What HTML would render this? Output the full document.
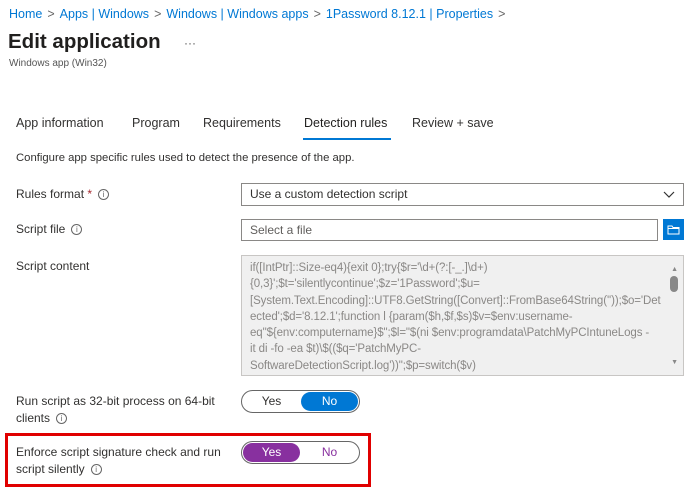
<!DOCTYPE html>
<html><head><style>
body{margin:0;width:699px;height:494px;background:#fff;font-family:"Segoe UI","Liberation Sans",sans-serif;color:#323130;position:relative;overflow:hidden}
.a{position:absolute;white-space:nowrap}
.bc{top:7px;left:9px;font-size:12.5px;color:#0078d4}
.bc span{color:#666;margin:0 5px}
.lbl{font-size:12px;color:#323130}
.i{display:inline-block;width:9px;height:9px;border:1px solid #666;border-radius:50%;font-size:8px;line-height:9px;text-align:center;color:#666;margin-left:6px;vertical-align:1px}
.box{position:absolute;border:1px solid #8a8886;box-sizing:border-box;font-size:12px;padding-left:8px}
.tog{position:absolute;border:1px solid #666;border-radius:12px;box-sizing:border-box;width:119px;height:23px;font-size:12px}
.tog div{position:absolute;top:1px;height:19px;width:57px;border-radius:10px;text-align:center;line-height:19px}
</style></head><body>
<div class="a bc">Home<span>&gt;</span>Apps | Windows<span>&gt;</span>Windows | Windows apps<span>&gt;</span>1Password 8.12.1 | Properties<span>&gt;</span></div>
<div class="a" style="top:30px;left:8px;font-size:20.5px;font-weight:600;color:#201f1e">Edit application</div>
<div class="a" style="top:36px;left:184px;font-size:12px;color:#555">···</div>
<div class="a" style="top:58px;left:9px;font-size:10px;color:#555">Windows app (Win32)</div>
<div class="a" style="top:116px;left:16px;font-size:12.5px">App information</div>
<div class="a" style="top:116px;left:132px;font-size:12.5px">Program</div>
<div class="a" style="top:116px;left:203px;font-size:12.5px">Requirements</div>
<div class="a" style="top:116px;left:304px;font-size:12.5px;color:#201f1e">Detection rules</div>
<div class="a" style="top:138px;left:303px;width:88px;height:2px;background:#0078d4"></div>
<div class="a" style="top:116px;left:412px;font-size:12.5px">Review + save</div>
<div class="a" style="top:152px;left:16px;font-size:11.3px">Configure app specific rules used to detect the presence of the app.</div>
<div class="a lbl" style="top:187px;left:16px">Rules format <span style="color:#a4262c">*</span><span class="i">i</span></div>
<div class="box" style="left:241px;top:183px;width:443px;height:23px;line-height:21px">Use a custom detection script
<svg style="position:absolute;right:8px;top:7px" width="12" height="8"><path d="M1 1l5 5 5-5" fill="none" stroke="#333" stroke-width="1.2"/></svg></div>
<div class="a lbl" style="top:222px;left:16px">Script file<span class="i">i</span></div>
<div class="box" style="left:241px;top:219px;width:417px;height:22px;line-height:20px;color:#605e5c">Select a file</div>
<div class="a" style="left:663px;top:219px;width:21px;height:21px;background:#0078d4">
<svg width="21" height="21"><path d="M5 7h4l1 1.5h6v6.5h-11z M5 9.5h11" fill="none" stroke="#fff" stroke-width="1"/></svg></div>
<div class="a lbl" style="top:259px;left:16px">Script content</div>
<div class="box" style="left:241px;top:255px;width:443px;height:121px;background:#f0f0f0;border-color:#c8c6c4;color:#8a8886;font-size:11.5px;line-height:16.3px;padding-top:4px;overflow:hidden">
<div style="white-space:nowrap;letter-spacing:-0.1px">if([IntPtr]::Size-eq4){exit 0};try{$r='\d+(?:[-_.]\d+)<br>{0,3}';$t='silentlycontinue';$z='1Password';$u=<br>[System.Text.Encoding]::UTF8.GetString([Convert]::FromBase64String(''));$o='Det<br>ected';$d='8.12.1';function l {param($h,$f,$s)$v=$env:username-<br>eq"${env:computername}$";$l="$(ni $env:programdata\PatchMyPCIntuneLogs -<br>it di -fo -ea $t)\$(($q='PatchMyPC-<br>SoftwareDetectionScript.log'))";$p=switch($v)</div>
<div style="position:absolute;right:0;top:0;width:18px;height:119px;background:#f0f0f0"></div>
<div style="position:absolute;right:5px;top:6px;font-size:7px;color:#888">▲</div>
<div style="position:absolute;right:5px;top:20px;width:8px;height:16px;border-radius:4px;background:#888"></div>
<div style="position:absolute;right:5px;bottom:4px;font-size:7px;color:#888">▼</div>
</div>
<div class="a lbl" style="top:393px;left:16px;line-height:17px">Run script as 32-bit process on 64-bit<br>clients<span class="i">i</span></div>
<div class="tog" style="left:241px;top:390px"><div style="left:1px">Yes</div><div style="left:59px;background:#0078d4;color:#fff">No</div></div>
<div class="a" style="left:5px;top:433px;width:360px;height:48px;border:3px solid #e00000"></div>
<div class="a lbl" style="top:444px;left:16px;line-height:17px">Enforce script signature check and run<br>script silently<span class="i">i</span></div>
<div class="tog" style="left:241px;top:441px"><div style="left:1px;background:#88309f;color:#fff">Yes</div><div style="left:59px;color:#88309f">No</div></div>
</body></html>
